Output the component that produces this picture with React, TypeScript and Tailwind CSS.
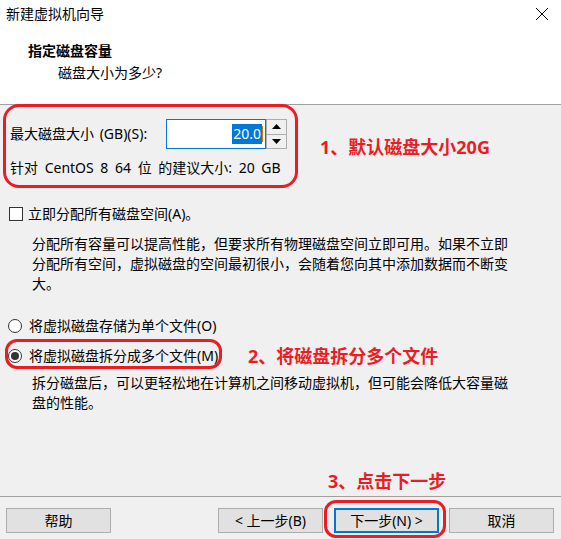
import React from "react";

// Wizard page: "指定磁盘容量" with red annotation marks

const RED = "border-[#ec1c24]";

function WinButton({ label, primary }: { label: string; primary?: boolean }) {
  return (
    <button
      type="button"
      className={
        "h-[25px] w-[105px] bg-[#e1e1e1] text-[14px] leading-5 text-black " +
        (primary ? "border-2 border-[#0078d7]" : "border border-[#adadad]")
      }
    >
      {label}
    </button>
  );
}

function Spinner() {
  return (
    <div className="flex h-[30px] w-[21px] flex-col border border-[#adadad] bg-[#f0f0f0]">
      <div className="flex flex-1 items-center justify-center border-b border-[#adadad]">
        <svg width="9" height="5" viewBox="0 0 9 5">
          <path d="M0 5 L4.5 0 L9 5 Z" fill="#000" />
        </svg>
      </div>
      <div className="flex flex-1 items-center justify-center">
        <svg width="9" height="5" viewBox="0 0 9 5">
          <path d="M0 0 L4.5 5 L9 0 Z" fill="#000" />
        </svg>
      </div>
    </div>
  );
}

function Radio({ checked }: { checked?: boolean }) {
  return (
    <span className="flex h-[14px] w-[14px] items-center justify-center rounded-full border border-[#333] bg-white">
      {checked && <span className="h-[8px] w-[8px] rounded-full bg-[#333]" />}
    </span>
  );
}

export default function App() {
  return (
    <div
      className="flex h-[539px] w-[561px] flex-col overflow-hidden bg-[#f0f0f0] text-[14px] leading-5 text-black"
      style={{ fontFamily: '"Noto Sans", "Noto Sans CJK SC", sans-serif' }}
    >
      {/* Header */}
      <div className="h-[105px] border-b border-[#a0a0a0] bg-white">
        <div className="flex h-[28px] items-center justify-between pl-[6px] pr-[12px]">
          <span>新建虚拟机向导</span>
          <svg width="14" height="14" viewBox="0 0 14 14">
            <path d="M1 1 L13 13 M13 1 L1 13" stroke="#000" strokeWidth="1" />
          </svg>
        </div>
        <div className="mt-[13px] pl-[28px] font-bold">指定磁盘容量</div>
        <div className="mt-[2px] pl-[58px]">磁盘大小为多少?</div>
      </div>

      {/* Disk size group */}
      <div className="flex">
        <div className="relative h-[83px] w-[300px] pt-[14px]">
          <div className="flex items-center">
            <span className="w-[166px] pl-[10px] [word-spacing:2px]">最大磁盘大小 (GB)(S):</span>
            <div className="flex h-[30px] w-[100px] items-center justify-end border border-[#0078d7] bg-white pr-[2px]">
              <span className="bg-[#0078d7] px-px text-white">20.0</span>
              <span className="h-[16px] w-px bg-[#d07a00]" />
            </div>
            <Spinner />
          </div>
          <div className="mt-[9px] pl-[10px] [word-spacing:3px]">针对 CentOS 8 64 位 的建议大小: 20 GB</div>
          <div className={"absolute left-[3px] top-[-1px] h-[84px] w-[295px] rounded-[16px] border-[3px] " + RED} />
        </div>
        <div className="ml-[20px] mt-[30px] text-[18px] font-bold leading-6 text-[#ec1c24]">
          1、默认磁盘大小20G
        </div>
      </div>

      {/* Allocate now */}
      <div className="mt-[16px] flex items-center pl-[9px]">
        <span className="h-[14px] w-[14px] border border-[#333] bg-white" />
        <span className="ml-[5px]">立即分配所有磁盘空间(A)。</span>
      </div>
      <p className="mt-[10px] w-[512px] pl-[32px]">
        分配所有容量可以提高性能，但要求所有物理磁盘空间立即可用。如果不立即分配所有空间，虚拟磁盘的空间最初很小，会随着您向其中添加数据而不断变大。
      </p>

      {/* Single / split file */}
      <div className="mt-[22px] flex items-center pl-[8px]">
        <Radio />
        <span className="ml-[7px]">将虚拟磁盘存储为单个文件(O)</span>
      </div>
      <div className="mt-[8px] flex items-center">
        <div className="relative flex w-[248px] items-center pl-[8px]">
          <Radio checked />
          <span className="ml-[7px]">将虚拟磁盘拆分成多个文件(M)</span>
          <div className={"absolute left-[5px] top-[-7px] h-[30px] w-[217px] rounded-[12px] border-[3px] " + RED} />
        </div>
        <span className="text-[18px] font-bold leading-6 text-[#ec1c24]">2、将磁盘拆分多个文件</span>
      </div>
      <p className="mt-[5px] w-[512px] pl-[32px]">
        拆分磁盘后，可以更轻松地在计算机之间移动虚拟机，但可能会降低大容量磁盘的性能。
      </p>

      {/* Step 3 note */}
      <div className="mb-[3px] mt-auto pl-[328px] text-[18px] font-bold leading-6 text-[#ec1c24]">
        3、点击下一步
      </div>

      {/* Footer */}
      <div className="flex h-[43px] items-start border-t border-[#a0a0a0] pl-[6px] pr-[7px] pt-[11px]">
        <WinButton label="帮助" />
        <div className="flex-1" />
        <WinButton label="< 上一步(B)" />
        <div className="relative ml-[11px]">
          <WinButton label="下一步(N) >" primary />
          <div className={"absolute left-[-10px] top-[-8px] h-[38px] w-[122px] rounded-[12px] border-[3px] " + RED} />
        </div>
        <div className="ml-[10px]">
          <WinButton label="取消" />
        </div>
      </div>
    </div>
  );
}
